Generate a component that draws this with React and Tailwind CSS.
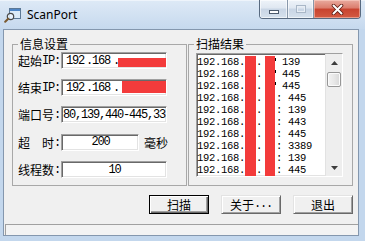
import React from "react";

const mono = "font-['Liberation_Mono',monospace] tracking-[-1.2px] text-[12px]";
const listMono = "font-['Liberation_Mono',monospace] tracking-[-0.3px] text-[10.5px]";
const sunken =
  "bg-white border border-t-[#a0a0a0] border-l-[#a0a0a0] border-b-white border-r-white shadow-[inset_1px_1px_0_#696969,inset_-1px_-1px_0_#e3e3e3]";
const raised =
  "bg-[#f0f0f0] border border-t-[#e3e3e3] border-l-[#e3e3e3] border-b-[#696969] border-r-[#696969] shadow-[inset_1px_1px_0_#fff,inset_-1px_-1px_0_#a0a0a0]";
const raisedDefault =
  "bg-[#f0f0f0] border border-black shadow-[inset_1px_1px_0_#fff,inset_-1px_-1px_0_#696969,inset_-2px_-2px_0_#a0a0a0]";

const rows = [
  { p: "139", s: true },
  { p: "445", s: true },
  { p: "445", s: true },
  { p: "445" },
  { p: "139" },
  { p: "443" },
  { p: "445" },
  { p: "3389" },
  { p: "139" },
  { p: "445" },
];

function AppIcon() {
  return (
    <svg width="17" height="16" viewBox="0 0 17 16">
      <rect x="5.5" y="1.5" width="11" height="10" fill="#dcebf8" stroke="#5b7896" />
      <rect x="6" y="2" width="10" height="2" fill="#4f86c6" />
      <circle cx="6.5" cy="9.5" r="3.2" fill="#eaf5ff" fillOpacity="0.85" stroke="#4a4a4a" strokeWidth="1.2" />
      <line x1="4.2" y1="11.8" x2="1.2" y2="14.8" stroke="#7a5a30" strokeWidth="2" strokeLinecap="round" />
    </svg>
  );
}

function Label({ cn, ascii }) {
  return (
    <div className="w-[43px] flex items-center h-[17px] pt-[1px] whitespace-nowrap">
      <span>{cn}</span>
      <span className={mono}>{ascii}</span>
    </div>
  );
}

export default function App() {
  return (
    <div className="w-[365px] h-[241px] overflow-hidden flex flex-col bg-[#c3d7ed] text-black text-[12px] font-['Noto_Sans_CJK_SC',sans-serif]">
      {/* Title bar */}
      <div className="h-[29px] flex items-start bg-[linear-gradient(#dde9f6,#c6d9ee)] border-t border-t-[#eef4fb]">
        <div className="flex items-center h-[27px] pl-[4px] gap-[6px]">
          <AppIcon />
          <span className="font-['Noto_Sans',sans-serif] text-[12px] leading-[14px] text-black">ScanPort</span>
        </div>
        <div className="ml-auto mr-[4px] -mt-[1px] flex h-[19px] border border-t-0 border-[#586a80] rounded-b-[4px] overflow-hidden">
          <div className="w-[28px] h-full flex items-end justify-center pb-[4px] bg-[linear-gradient(#eef3f9,#dfe7f1_45%,#c8d5e5_50%,#d6e1ed)] border-r border-r-[#8898ab] shadow-[inset_0_0_0_1px_rgba(255,255,255,0.6)]">
            <div className="w-[10px] h-[4px] bg-white border border-[#4c5a6c]" />
          </div>
          <div className="w-[26px] h-full flex items-center justify-center bg-[linear-gradient(#eef3f9,#dfe7f1_45%,#c8d5e5_50%,#d6e1ed)] border-r border-r-[#8898ab] shadow-[inset_0_0_0_1px_rgba(255,255,255,0.6)]">
            <div className="w-[10px] h-[8px] border border-[#a9b7c7] shadow-[inset_0_0_0_1px_#e8eef5]" />
          </div>
          <div className="w-[46px] h-full flex items-center justify-center bg-[linear-gradient(#e9ab9f,#db7c6c_45%,#c8432f_50%,#d35a42)] shadow-[inset_0_0_0_1px_rgba(255,220,210,0.5)]">
            <svg width="13" height="11" viewBox="0 0 13 11">
              <path d="M2.5 1.5 L10.5 9.5 M10.5 1.5 L2.5 9.5" stroke="#5a1a12" strokeWidth="3.6" strokeLinecap="round" />
              <path d="M2.5 1.5 L10.5 9.5 M10.5 1.5 L2.5 9.5" stroke="#ffffff" strokeWidth="2" strokeLinecap="round" />
            </svg>
          </div>
        </div>
      </div>

      {/* Client */}
      <div className="ml-[3px] mr-[6px] h-[207px] border border-[#8497ae] bg-[#f0f0f0] flex flex-col">
        <div className="flex pl-[8px] pt-[7px] gap-[1px]">
          {/* 信息设置 */}
          <fieldset className="w-[175px] h-[149px] border border-[#a8a8a8] pl-[5px] pr-0 pb-0 m-0">
            <legend className="px-[2px] leading-[14px]">信息设置</legend>
            <div className="flex flex-col gap-[10px] pt-[1px]">
              <div className="flex items-center">
                <Label cn="起始" ascii="IP:" />
                <div className={`${sunken} w-[106px] h-[17px] flex items-center pl-[4px] overflow-hidden`}>
                  <span className={mono}>192</span>
                  <span className={`${mono} ml-[2px]`}>.</span>
                  <span className={mono}>168</span>
                  <span className={`${mono} ml-[3px] w-[5px]`}>.</span>
                  <span className="self-end mb-[1px] w-[49px] h-[9px] bg-[#f33b3b]" />
                </div>
              </div>
              <div className="flex items-center">
                <Label cn="结束" ascii="IP:" />
                <div className={`${sunken} w-[106px] h-[17px] flex items-center pl-[4px] overflow-hidden`}>
                  <span className={mono}>192</span>
                  <span className={`${mono} ml-[2px]`}>.</span>
                  <span className={mono}>168</span>
                  <span className={`${mono} ml-[3px] w-[5px]`}>.</span>
                  <span className="self-start mt-[1px] ml-[4px] w-[44px] h-[12px] bg-[#f33b3b]" />
                </div>
              </div>
              <div className="flex items-center">
                <Label cn="端口号" ascii=":" />
                <div className={`${sunken} w-[106px] h-[17px] flex items-center pl-[1px] overflow-hidden whitespace-nowrap`}>
                  <span className={mono}>80,139,440-445,33</span>
                </div>
              </div>
              <div className="flex items-center">
                <Label cn="超　时" ascii=":" />
                <div className={`${sunken} w-[78px] h-[17px] flex items-center justify-center`}>
                  <span className={`${mono} pl-[1px]`}>200</span>
                </div>
                <span className="ml-[5px] leading-[17px] pt-[1px]">毫秒</span>
              </div>
              <div className="flex items-center">
                <Label cn="线程数" ascii=":" />
                <div className={`${sunken} w-[106px] h-[17px] flex items-center justify-center`}>
                  <span className={`${mono} pl-[1px]`}>10</span>
                </div>
              </div>
            </div>
          </fieldset>

          {/* 扫描结果 */}
          <fieldset className="w-[165px] h-[149px] border border-[#a8a8a8] pl-[5px] pr-0 pb-0 m-0">
            <legend className="px-[2px] leading-[14px]">扫描结果</legend>
            <div className={`${sunken} ml-[2px] mt-[2px] w-[147px] h-[124px] flex overflow-hidden`}>
              <div className="flex-1 pt-[2px] overflow-hidden">
                {rows.map((r, i) => (
                  <div key={i} className={`${listMono} flex h-[12px] leading-[12px] whitespace-nowrap`}>
                    <span>192.168.</span>
                    <span className="w-[11px] h-[12px] bg-[#f33b3b]" />
                    <span className="w-[9px]">.</span>
                    <span className="w-[10px] h-[12px] bg-[#f33b3b]" />
                    {r.s ? (
                      <>
                        <span className="w-[7px] flex">
                          <span className="mt-[2px] w-[1px] h-[3px] bg-black" />
                        </span>
                        <span>{r.p}</span>
                      </>
                    ) : (
                      <span className="ml-[1px]">: {r.p}</span>
                    )}
                  </div>
                ))}
              </div>
              <div className="w-[17px] h-full flex flex-col bg-[#eeeeee] border-l border-l-[#e2e2e2]">
                <div className="h-[17px] flex items-center justify-center">
                  <svg width="7" height="4" viewBox="0 0 7 4">
                    <polygon points="0,4 3.5,0 7,4" fill="#3c3c3c" />
                  </svg>
                </div>
                <div className="mx-[1px] mt-[1px] h-[15px] rounded-[2px] border border-[#979797] bg-[linear-gradient(90deg,#f3f3f3,#e8e8e8_50%,#d8d8d8)] shadow-[inset_0_0_0_1px_#fbfbfb]" />
                <div className="flex-1" />
                <div className="h-[17px] flex items-center justify-center">
                  <svg width="7" height="4" viewBox="0 0 7 4">
                    <polygon points="0,0 7,0 3.5,4" fill="#3c3c3c" />
                  </svg>
                </div>
              </div>
            </div>
          </fieldset>
        </div>

        {/* Buttons */}
        <div className="flex justify-end gap-[12px] pr-[5px] mt-[9px]">
          <button className={`${raisedDefault} w-[60px] h-[19px] leading-[15px] text-[12px] flex items-center justify-center`}>
            扫描
          </button>
          <button className={`${raised} w-[60px] h-[19px] leading-[15px] text-[12px] flex items-center justify-center`}>
            <span>关于</span>
            <span className={mono}>...</span>
          </button>
          <button className={`${raised} w-[60px] h-[19px] leading-[15px] text-[12px] flex items-center justify-center`}>
            退出
          </button>
        </div>

        {/* Status bar */}
        <div className="mt-auto ml-[1px] h-[11px] border-t border-l border-[#a0a0a0] bg-[#f3f3f3]" />
      </div>
    </div>
  );
}
